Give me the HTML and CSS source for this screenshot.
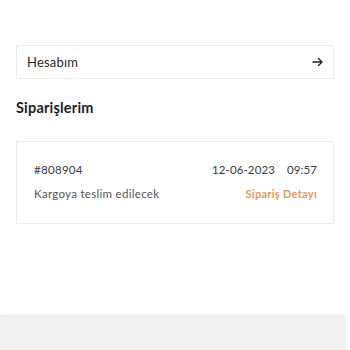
FILE: index.html
```html
<!DOCTYPE html>
<html lang="tr">
<head>
<meta charset="utf-8">
<link rel="stylesheet" href="styles.css">
</head>
<body>
<main class="content">
  <a class="account-row" href="#">
    <span class="account-label">Hesabım</span>
    <svg class="arrow" width="12" height="12" viewBox="0 0 12 12" aria-hidden="true">
      <path d="M2 6H11M7.5 2.5L11 6L7.5 9.5" fill="none" stroke="#222" stroke-width="1.4" stroke-linecap="round" stroke-linejoin="round"/>
    </svg>
  </a>
  <h2 class="section-title">Siparişlerim</h2>
  <div class="order-card">
    <div class="order-line">
      <span class="order-no">#808904</span>
      <span class="order-date"><span>12-06-2023</span><span class="order-time">09:57</span></span>
    </div>
    <div class="order-line">
      <span class="order-status">Kargoya teslim edilecek</span>
      <a class="order-link" href="#">Sipariş Detayı</a>
    </div>
  </div>
</main>
<footer class="footer"></footer>
</body>
</html>
```
FILE: styles.css
```css
* { box-sizing: border-box; }
html, body { margin: 0; padding: 0; background: #fff; }
body {
  font-family: "Lato", "Open Sans", sans-serif;
  color: #222;
  width: 350px;
  height: 350px;
  overflow: hidden;
  display: flex;
  flex-direction: column;
}
.content {
  padding: 45px 16px 0 16px;
  box-sizing: content-box;
  width: 318px;
  flex: 1;
}
.account-row {
  display: flex;
  align-items: center;
  justify-content: space-between;
  height: 34px;
  padding: 0 10px 0 10px;
  border: 1px solid #ececec;
  text-decoration: none;
  color: #2a2a2a;
  font-size: 13px;
  letter-spacing: 0.2px;
}
.arrow { display: block; }
.section-title {
  margin: 20px 0 0 0;
  font-size: 14.5px;
  font-weight: 700;
  color: #1e1e1e;
  line-height: 18px;
  letter-spacing: 0.2px;
}
.order-card {
  margin-top: 24px;
  height: 83px;
  border: 1px solid #ececec;
  padding: 21px 16px 0 17px;
  display: flex;
  flex-direction: column;
  gap: 10px;
}
.order-line {
  display: flex;
  justify-content: space-between;
  align-items: center;
  line-height: 14px;
  font-size: 11.5px;
  color: #3a3a3a;
  letter-spacing: 0.3px;
}
.order-date { display: flex; gap: 12px; letter-spacing: 0.1px; }
.order-status { color: #555; }
.order-link {
  color: #dd9a5c;
  text-decoration: none;
  font-weight: 700;
  font-size: 11px;
}
.footer {
  height: 35px;
  width: 346px;
  background: #f2f2f2;
  box-shadow: 0 -1px 2px rgba(0,0,0,0.03), 1px 0 2px rgba(0,0,0,0.04);
  flex-shrink: 0;
}
```
